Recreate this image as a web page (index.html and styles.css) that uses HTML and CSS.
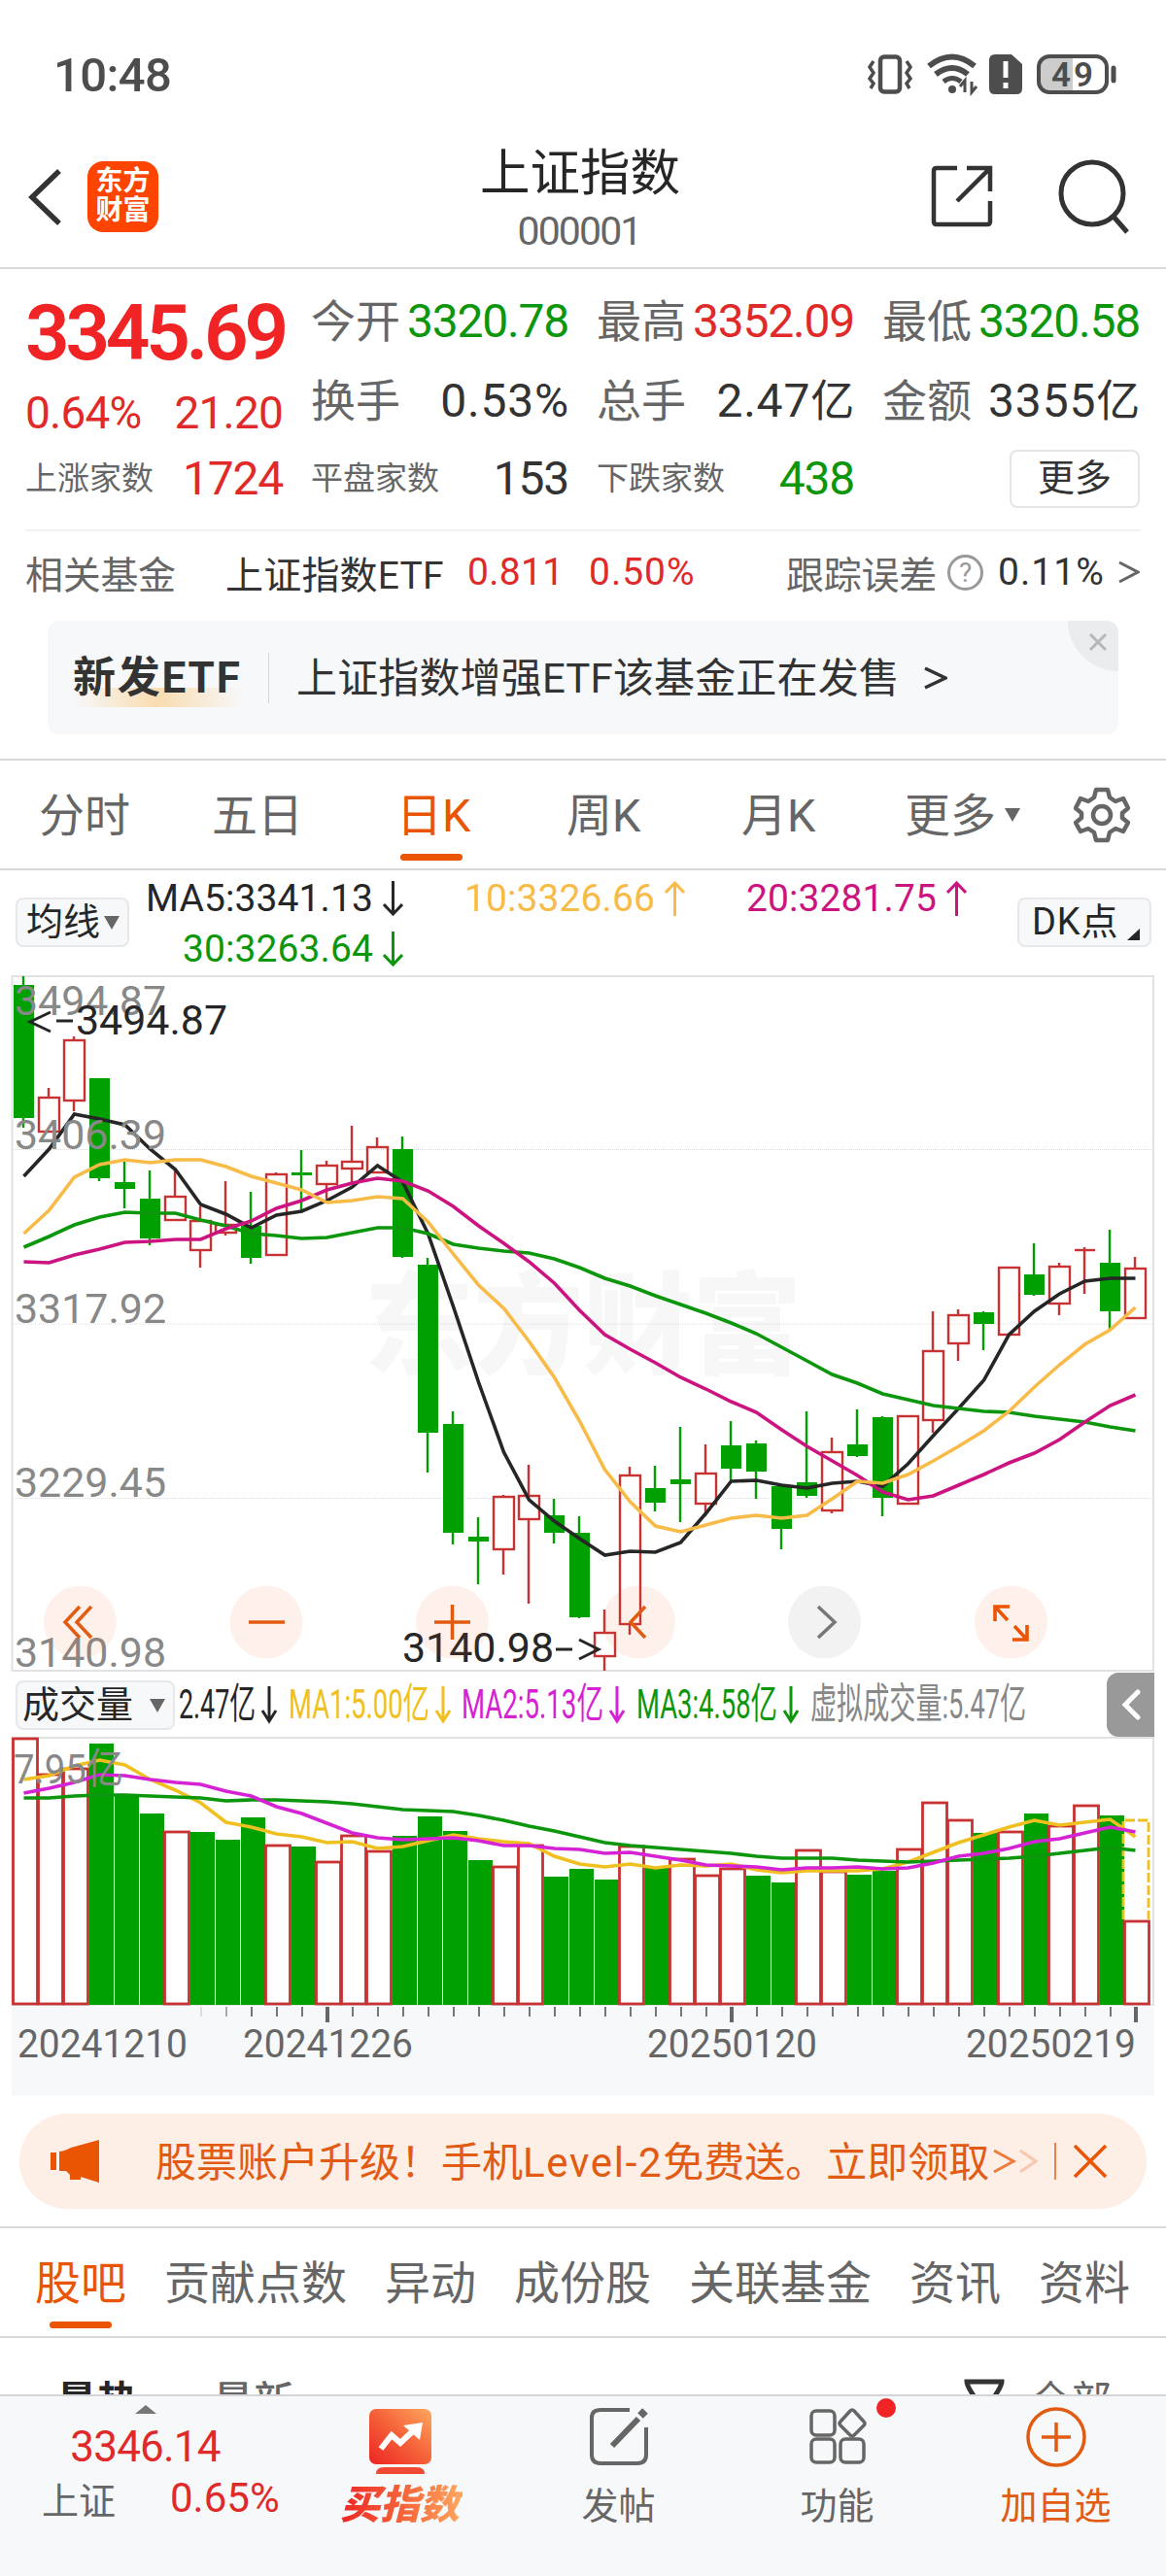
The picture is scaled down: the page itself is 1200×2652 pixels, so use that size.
FILE: index.html
```html
<!DOCTYPE html>
<html lang="zh-CN">
<head>
    <meta charset="utf-8" />
    <title>上证指数</title>
    <link rel="stylesheet" href="styles.css">
</head>
<body>
    <div class="status">
        <span class="time">10:48</span>
        <svg class="status-icons" width="260" height="44" viewBox="890 55 260 44" fill="none" stroke="#4d4d4d">
            <rect x="906" y="58.500" width="20" height="36" rx="4" stroke-width="4.500"/>
            <path d="M899 63l-4 6 4 6-4 6 4 5-3 5M933 63l4 6-4 6 4 6-4 5 3 5" stroke-width="3.500"/>
            <path d="M956 68q24-19 47 0M963 76.500q17-13 33 0" stroke-width="6"/>
            <path d="M971 84q9-7 18 0" stroke-width="5"/>
            <circle cx="980" cy="92" r="4" fill="#4d4d4d" stroke="none"/>
            <path d="M993 95V83l-5 6M1000 84v11l5-6" stroke-width="3"/>
            <path d="M1024 56h17l11 10v25q0 6-6 6h-22q-6 0-6-6V62q0-6 6-6z" fill="#4d4d4d" stroke="none"/>
            <path d="M1035 63v17M1035 85v6" stroke="#fff" stroke-width="5"/>
            <path d="M1079 58h25v37h-25q-9 0-9-9V67q0-9 9-9z" fill="#ccc" stroke="none"/>
            <rect x="1069" y="58" width="70" height="37" rx="11" stroke-width="4"/>
            <path d="M1146 70v13" stroke-width="5" stroke-linecap="round"/>
            <text x="1082" y="88.500" class="battery" textLength="43">49</text>
        </svg>
    </div>

    <div class="header">
        <svg class="back" width="40" height="64" viewBox="0 0 40 64"><path d="M35 5L7 32l28 27" fill="none" stroke="#333" stroke-width="5.500"/></svg>
        <div class="logo">东方<br>财富</div>
        <div class="title">
            <h1>上证指数</h1>
            <p>000001</p>
        </div>
        <svg class="share" width="66" height="66" viewBox="0 0 66 66" fill="none" stroke="#333" stroke-width="4.500">
            <path d="M28 4H7Q4 4 4 7v52q0 3 3 3h52q3 0 3-3V38M38 4h24v24M62 4L28 38"/>
        </svg>
        <svg class="search" width="78" height="78" viewBox="0 0 78 78" fill="none" stroke="#333" stroke-width="5">
            <circle cx="36" cy="36" r="32"/><path d="M58 60l14 16"/>
        </svg>
    </div>

    <div class="quote">
        <div class="cell low"><b class="price">3345.69</b></div>
        <div class="cell"><label>今开</label><span class="num down">3320.78</span></div>
        <div class="cell"><label>最高</label><span class="num up">3352.09</span></div>
        <div class="cell"><label>最低</label><span class="num down">3320.58</span></div>
        <div class="cell low"><span class="num up mid">0.64%</span><span class="num up mid">21.20</span></div>
        <div class="cell"><label>换手</label><span class="num wide">0.53%</span></div>
        <div class="cell"><label>总手</label><span class="num wide">2.47<i>亿</i></span></div>
        <div class="cell"><label>金额</label><span class="num wide">3355<i>亿</i></span></div>
        <div class="cell"><label class="small">上涨家数</label><span class="num up">1724</span></div>
        <div class="cell"><label class="small">平盘家数</label><span class="num">153</span></div>
        <div class="cell"><label class="small">下跌家数</label><span class="num down">438</span></div>
        <div class="cell end"><a class="more">更多</a></div>
    </div>

    <div class="fund">
        <span class="gray w1">相关基金</span>
        <span class="w2">上证指数ETF</span>
        <span class="up w3">0.811</span>
        <span class="up w5">0.50%</span>
        <span class="gray right">跟踪误差</span>
        <span class="ask">?</span>
        <span class="w4">0.11%</span>
        <svg width="22" height="26" viewBox="0 0 22 26" fill="none" stroke="#666" stroke-width="3"><path d="M1 3l19 10L1 23"/></svg>
    </div>

    <div class="ad">
        <b>新发ETF</b>
        <p>上证指数增强ETF该基金正在发售</p>
        <svg width="24" height="26" viewBox="0 0 24 26" fill="none" stroke="#333" stroke-width="3.500"><path d="M1 3l21 10L1 23"/></svg>
        <span class="ad-close">
            <svg width="20" height="20" viewBox="0 0 20 20" stroke="#b5b7ba" stroke-width="3"><path d="M2 2l16 16M18 2L2 18"/></svg>
        </span>
    </div>

    <div class="tabs">
        <a class="t1">分时</a>
        <a class="t2">五日</a>
        <a class="t3 current">日K</a>
        <a class="t4">周K</a>
        <a class="t5">月K</a>
        <a class="t6">更多</a>
        <svg class="caret" width="16" height="14" viewBox="0 0 16 14"><path d="M0 0h16L8 14z" fill="#666"/></svg>
        <svg width="58" height="60" viewBox="-29 -30 58 60" fill="none" stroke="#666" stroke-width="4.500" stroke-linejoin="round">
            <path d="M-6-26H6L8-18 14-14 22-17 27-7 21-2V3L27 8 22 17 14 14 8 18 6 26H-6L-8 18-14 14-22 17-27 8-21 3V-2L-27-7-22-17-14-14-8-18z"/>
            <circle r="9"/>
        </svg>
    </div>

    <div class="legend">
        <a class="btn ma">均线<svg width="16" height="14" viewBox="0 0 16 14"><path d="M0 0h16L8 14z" fill="#666"/></svg></a>
        <div class="lines">
            <span class="c5">MA5:3341.13<svg class="arr" viewBox="0 0 21 36"><path d="M10.500 0v34M1 24l9.500 10L20 24"/></svg></span>
            <span class="c10">10:3326.66<svg class="arr" viewBox="0 0 21 36"><path d="M10.500 36V2M1 12l9.500-10L20 12"/></svg></span>
            <span class="c20">20:3281.75<svg class="arr" viewBox="0 0 21 36"><path d="M10.500 36V2M1 12l9.500-10L20 12"/></svg></span>
            <span class="c30">30:3263.64<svg class="arr" viewBox="0 0 21 36"><path d="M10.500 0v34M1 24l9.500 10L20 24"/></svg></span>
        </div>
        <a class="btn dk">DK点<svg width="13" height="12" viewBox="0 0 13 12"><path d="M13 0v12H0z" fill="#262626"/></svg></a>
    </div>

    <svg id="kline" width="1200" height="718" viewBox="0 1004 1200 718"></svg>

    <div class="vol-legend">
        <a class="btn vol">成交量<svg width="16" height="14" viewBox="0 0 16 14"><path d="M0 0h16L8 14z" fill="#666"/></svg></a>
        <svg class="vol-text" width="930" height="66" viewBox="180 1722 930 66">
            <g fill="#262626" stroke="#262626"><text x="184" y="1769" textLength="79" lengthAdjust="spacingAndGlyphs">2.47亿</text><path d="M277 1736v35M270 1761l7 11 7-11"/></g>
            <g fill="#f0c020" stroke="#f0c020"><text x="297" y="1769" textLength="145" lengthAdjust="spacingAndGlyphs">MA1:5.00亿</text><path d="M456 1736v35M449 1761l7 11 7-11"/></g>
            <g fill="#d422d4" stroke="#d422d4"><text x="475" y="1769" textLength="146" lengthAdjust="spacingAndGlyphs">MA2:5.13亿</text><path d="M635 1736v35M628 1761l7 11 7-11"/></g>
            <g fill="#0c960c" stroke="#0c960c"><text x="655" y="1769" textLength="145" lengthAdjust="spacingAndGlyphs">MA3:4.58亿</text><path d="M814 1736v35M807 1761l7 11 7-11"/></g>
            <text x="834" y="1769" textLength="222" lengthAdjust="spacingAndGlyphs" fill="#888">虚拟成交量:5.47亿</text>
        </svg>
        <a class="fold"><svg width="20" height="32" viewBox="0 0 20 32"><path d="M17 3L4 16l13 13" fill="none" stroke="#fff" stroke-width="5" stroke-linecap="round"/></svg></a>
    </div>

    <svg id="volume" width="1200" height="369" viewBox="0 1788 1200 369"></svg>

    <div class="notice">
        <svg width="50" height="44" viewBox="0 0 50 44" fill="#ea5504"><path d="M0 13h6v18H0zM9 12q4 0 12-4L50 0v44l-19-6v3H20v-5l-4-4H9z"/></svg>
        <p>股票账户升级！手机<span>Level-2</span>免费送。立即领取</p>
        <svg class="gt" width="46" height="28" viewBox="0 0 46 28" fill="none" stroke="#ea5504" stroke-width="3"><path d="M1 3l20 11L1 25" opacity=".75"/><path d="M28 3l16 11L28 25" opacity=".25"/></svg>
        <svg class="close" width="36" height="36" viewBox="0 0 36 36" stroke="#ea5504" stroke-width="3.500"><path d="M2 2l32 32M34 2L2 34"/></svg>
    </div>

    <div class="nav">
        <a class="current">股吧</a>
        <a>贡献点数</a>
        <a>异动</a>
        <a>成份股</a>
        <a>关联基金</a>
        <a>资讯</a>
        <a>资料</a>
    </div>

    <div class="feed">
        <b>最热</b>
        <span class="new">最新</span>
        <svg width="42" height="40" viewBox="0 0 42 40" fill="none" stroke="#333" stroke-width="5"><path d="M3 3h36q0 5-11 20v14H14V23Q3 8 3 3z"/></svg>
        <span>全部</span>
    </div>

    <div class="bottom">
        <div class="index">
            <svg width="22" height="9" viewBox="0 0 22 9"><path d="M0 9L11 0l11 9z" fill="#777"/></svg>
            <div class="num up">3346.14</div>
            <div class="row"><span>上证</span><span class="num up">0.65%</span></div>
        </div>
        <div class="item buy">
            <svg width="66" height="68" viewBox="0 0 66 68">
                <defs><linearGradient id="g" x1="0" y1="1" x2="1" y2="0"><stop offset="0" stop-color="#ed2424"/><stop offset=".5" stop-color="#f46138"/><stop offset="1" stop-color="#ffa75e"/></linearGradient></defs>
                <rect x="1" width="64" height="57" rx="7" fill="url(#g)"/>
                <path d="M8 67q0-7 8-7h34q8 0 8 7z" fill="#f04a34"/>
                <path d="M13 41l11-14 9 8 16-15" fill="none" stroke="#fff" stroke-width="6"/>
                <path d="M36 17l20-3-3 18z" fill="#fff"/>
            </svg>
            <span>买指数</span>
        </div>
        <div class="item">
            <svg width="62" height="62" viewBox="0 0 62 62" fill="none" stroke="#666" stroke-width="4">
                <path d="M42 4H12Q3 4 3 12v38q0 9 9 9h38q9 0 9-9V22"/>
                <path d="M24 41L51 13" stroke-width="6"/><path d="M53 10l5-5" stroke-width="8"/>
            </svg>
            <span>发帖</span>
        </div>
        <div class="item">
            <svg width="62" height="62" viewBox="0 0 62 62" fill="none" stroke="#666" stroke-width="3.500">
                <rect x="4" y="5" width="24" height="25" rx="5"/><rect x="4" y="34" width="24" height="24" rx="5"/><rect x="34" y="34" width="24" height="24" rx="5"/>
                <path d="M44 5q2-2 4 0l10 11q2 2 0 4L48 30q-2 2-4 0L34 20q-2-2 0-4z"/>
            </svg>
            <i class="dot"></i>
            <span>功能</span>
        </div>
        <div class="item add">
            <svg width="64" height="64" viewBox="0 0 64 64" fill="none" stroke="#e25b12" stroke-width="3.500"><circle cx="32" cy="32" r="29"/><path d="M32 17v30M17 32h30"/></svg>
            <span>加自选</span>
        </div>
    </div>

    <script src="chart.js"></script>
</body>
</html>
```
FILE: styles.css
```css
* {
    margin: 0;
    padding: 0;
    box-sizing: border-box;
}

body {
    width: 1200px;
    background: #fff;
    color: #333;
    font-family: Roboto, "Noto Sans CJK SC", sans-serif;
    overflow-x: hidden;
}

svg {
    display: block;
    flex: none;
}

i {
    font-style: normal;
}

.up {
    color: #e02a2a !important;
}

.down {
    color: #0c960c !important;
}

.gray {
    color: #666;
}

/* status bar */
.status {
    display: flex;
    justify-content: space-between;
    height: 130px;
    padding: 55px 50px 0 55px;
}

.time {
    font-size: 49px;
    font-weight: 500;
    line-height: 45px;
    letter-spacing: -.6px;
    color: #4d4d4d;
}

.battery {
    font-size: 35px;
    font-weight: 600;
    fill: #4d4d4d;
    stroke: none;
}

/* title */
.header {
    display: flex;
    height: 147px;
    padding-left: 26px;
    border-bottom: 2px solid #d9d9d9;
}

.back {
    margin-top: 41px;
}

.logo {
    width: 73px;
    height: 73px;
    margin: 36px 0 0 24px;
    padding-top: 6px;
    border-radius: 16px;
    background: #ff4400;
    color: #fff;
    font-size: 28px;
    font-weight: 600;
    line-height: 30px;
    text-align: center;
}

.title {
    width: 260px;
    margin-left: 303px;
    text-align: center;
}

.title h1 {
    margin-top: 19px;
    font-size: 51.5px;
    font-weight: 400;
    line-height: 60px;
    color: #262626;
    white-space: nowrap;
    margin-right: -2px;
}

.title p {
    margin-top: 5px;
    font-size: 41px;
    line-height: 48px;
    letter-spacing: -1.9px;
    color: #666;
}

.title + .share {
    margin: 39px 0 0 231px;
}

.search {
    margin: 33px 0 0 65px;
}

/* quote numbers */
.quote {
    display: grid;
    grid-template-columns: repeat(4, 265px);
    grid-template-rows: 82px 82px 78px;
    column-gap: 29px;
    height: 270px;
    margin: 0 26px;
    padding: 13px 0 0;
    border-bottom: 2px solid #f2f2f2;
}

.cell {
    display: flex;
    align-items: center;
    justify-content: space-between;
    white-space: nowrap;
}

.cell.low {
    padding-top: 24px;
}

.cell.end {
    justify-content: flex-end;
}

.cell label {
    font-size: 46px;
    line-height: 50px;
    color: #666;
}

.cell label.small {
    font-size: 33px;
}

.num {
    font-size: 48px;
    line-height: 56px;
    letter-spacing: -1.2px;
}

.num.wide {
    letter-spacing: .8px;
    margin-right: -1px;
}

.num i {
    font-size: 45px;
}

.num.mid {
    font-size: 46px;
    letter-spacing: -.8px;
}

.price {
    font-size: 80px;
    font-weight: 600;
    line-height: 80px;
    letter-spacing: -4.3px;
    color: #f02424;
}

.more {
    width: 134px;
    height: 60px;
    border: 2px solid #e5e5e5;
    border-radius: 8px;
    font-size: 38px;
    line-height: 54px;
    text-align: center;
}

/* related fund */
.fund {
    display: flex;
    align-items: center;
    height: 84px;
    padding: 0 27px 0 26px;
    font-size: 39px;
    letter-spacing: -.3px;
    white-space: nowrap;
}

.w1 {
    width: 206px;
}

.w2 {
    width: 249px;
    letter-spacing: .2px;
}

.w3 {
    width: 125px;
    letter-spacing: .3px;
}

.w5 {
    letter-spacing: 1px;
}

.right {
    margin-left: auto;
}

.ask {
    width: 37px;
    height: 37px;
    margin: 0 15px 0 11px;
    border: 3px solid #999;
    border-radius: 50%;
    color: #999;
    font-size: 28px;
    line-height: 31px;
    text-align: center;
}

.w4 {
    margin-right: 14px;
    letter-spacing: 1.1px;
}

/* ad */
.ad {
    position: relative;
    display: flex;
    align-items: center;
    height: 117px;
    margin: 8px 49px 25px;
    padding-left: 26px;
    border-radius: 12px;
    background: #f7f8fa;
    overflow: hidden;
}

.ad b {
    width: 176px;
    font-size: 44px;
    line-height: 62px;
    letter-spacing: 1.8px;
    white-space: nowrap;
    background: linear-gradient(90deg, #f7f8fa, #f9dcb0 50%, #f7f8fa) 0 41px / 175px 20px no-repeat;
}

.ad p {
    margin: 0 25px 0 25px;
    padding: 2px 0 0 28px;
    border-left: 1px solid #d5d6d8;
    font-size: 42px;
    line-height: 50px;
    letter-spacing: .15px;
    white-space: nowrap;
}

.ad-close {
    position: absolute;
    right: 0;
    top: 0;
    width: 52px;
    height: 52px;
    padding: 12px 0 0 21px;
    border-bottom-left-radius: 52px;
    background: #ebecee;
}

/* period tabs */
.tabs {
    display: flex;
    align-items: center;
    height: 115px;
    padding-left: 40px;
    border-top: 2px solid #d9d9d9;
    border-bottom: 2px solid #d9d9d9;
    font-size: 47px;
    color: #666;
}

.tabs a {
    height: 111px;
    line-height: 113px;
    white-space: nowrap;
}

.t1 {
    width: 178px;
}

.t2 {
    width: 190px;
}

.t3 {
    width: 175px;
}

.t4 {
    width: 180px;
}

.t5 {
    width: 168px;
}

.t6 {
    width: 103px;
}

.caret {
    margin-right: 55px;
}

.current {
    color: #ea5504;
}

.current::after {
    content: "";
    display: block;
    width: 64px;
    height: 7px;
    margin: -17px 0 0 4px;
    border-radius: 4px;
    background: #ea5504;
}

/* moving averages */
.legend {
    display: flex;
    height: 108px;
    padding: 3px 0 0 16px;
}

.btn {
    display: flex;
    align-items: center;
    height: 51px;
    border: 2px solid #e6e8eb;
    border-radius: 8px;
    background: #f7f8fa;
    color: #262626;
    font-size: 38px;
    line-height: 47px;
    white-space: nowrap;
}

.ma {
    width: 117px;
    margin-top: 25px;
    padding-left: 9px;
    gap: 4px;
}

.lines {
    display: grid;
    grid-template-columns: repeat(3, 290px);
    grid-template-rows: 52px 52px;
    margin-left: -8px;
}

.lines span {
    display: flex;
    align-items: center;
    justify-content: flex-end;
    gap: 10px;
    font-size: 39px;
    letter-spacing: .1px;
}

.arr {
    width: 21px;
    height: 36px;
    fill: none;
    stroke: currentColor;
    stroke-width: 3;
}

.c5 {
    color: #262626;
}

.c10 {
    color: #f8bb48;
}

.c20 {
    color: #cc1480;
}

.c30 {
    color: #0c960c;
}

.dk {
    width: 138px;
    margin: 25px 0 0 52px;
    padding-left: 13px;
    gap: 9px;
    letter-spacing: .8px;
}

.dk svg {
    margin-top: 24px;
}

/* volume legend */
.vol-legend {
    display: flex;
    height: 66px;
    padding-left: 16px;
}

.vol {
    width: 164px;
    margin-top: 8px;
    padding-left: 5px;
    gap: 17px;
}

.vol-text {
    font-size: 43px;
}

.vol-text path {
    fill: none;
    stroke-width: 3;
}

.vol-text text {
    stroke: none;
}

.fold {
    display: flex;
    align-items: center;
    justify-content: center;
    width: 49px;
    height: 66px;
    margin-left: 29px;
    border-radius: 12px 0 0 12px;
    background: #999;
}

/* notice */
.notice {
    display: flex;
    align-items: center;
    height: 98px;
    margin: 19px 20px 18px;
    padding-left: 32px;
    border-radius: 49px;
    background: #fdeee6;
    color: #e25b12;
}

.notice p {
    width: 862px;
    margin-left: 58px;
    padding-bottom: 5px;
    font-size: 42px;
    white-space: nowrap;
}

.notice p span {
    letter-spacing: 1.7px;
}

.notice .close {
    margin-left: 17px;
}

.gt {
    box-sizing: content-box;
    padding-right: 17px;
    border-right: 2px solid #e8824d;
    height: 38px;
}

/* section nav */
.nav {
    display: flex;
    gap: 39px;
    height: 115px;
    padding-left: 36px;
    border-top: 2px solid #d9d9d9;
    border-bottom: 2px solid #d9d9d9;
    font-size: 47px;
    line-height: 113px;
    color: #666;
    white-space: nowrap;
}

.nav .current::after {
    margin-left: 15px;
}

.feed {
    display: flex;
    height: 58px;
    padding: 38px 0 0 58px;
    overflow: hidden;
    font-size: 42px;
    line-height: 56px;
    color: #666;
}

.feed .new {
    flex: none;
    width: 773px;
    margin-left: 77px;
    font-weight: 500;
}

.feed b,
.feed span {
    white-space: nowrap;
}

.feed b {
    color: #262626;
}

.feed svg {
    margin: 4px 26px 0 0;
}

/* bottom bar */
.bottom {
    display: flex;
    height: 187px;
    border-top: 2px solid #d3d5d8;
    background: #f7f8fa;
    font-size: 38px;
    color: #666;
}

.index {
    display: flex;
    flex-direction: column;
    align-items: center;
    width: 299px;
    padding-top: 9px;
}

.index .num {
    margin-top: 9px;
    font-size: 44px;
    line-height: 50px;
    letter-spacing: -.8px;
}

.index .row {
    display: flex;
    gap: 56px;
    width: 257px;
    padding-left: 22px;
    align-items: center;
    margin-top: 0;
}

.index .row .num {
    margin: 0;
    font-size: 42px;
    letter-spacing: 0;
}

.index span {
    white-space: nowrap;
}

.item {
    position: relative;
    display: flex;
    flex-direction: column;
    align-items: center;
    width: 225px;
    padding-top: 10px;
}

.item span {
    margin-top: 16px;
    line-height: 50px;
}

.buy {
    padding: 13px 0 0 0;
}

.buy span {
    margin-top: 5px;
    padding: 0 3px;
    font-size: 41px;
    font-weight: 900;
    font-style: italic;
    line-height: 52px;
    background: linear-gradient(90deg, #ed2424, #f46138 50%, #ffa75e);
    -webkit-background-clip: text;
    color: transparent;
}

.add {
    color: #e25b12;
}

.add span {
    margin-top: 14px;
}

.dot {
    position: absolute;
    left: 153px;
    top: 2px;
    width: 20px;
    height: 20px;
    border-radius: 50%;
    background: #f02424;
}

/* charts */
.axis {
    font-size: 43px;
    fill: #888;
}

.mark {
    font-size: 43px;
    fill: #262626;
}

.date {
    font-size: 41px;
    fill: #666;
}

.watermark {
    font-size: 114px;
    font-weight: 900;
    fill: #f7f7f7;
}
```
FILE: chart.js
```js
var GREEN = "#00a000", RED = "#c83232";
var step = 26, left = 24;

// [up, body top, body bottom, high, low]
var candles = [
    [0,1014,1151,1005,1161],[1,1130,1165,1120,1165],[1,1071,1133,1067,1144],[0,1110,1213,1110,1216],[0,1217,1224,1195,1244],
    [0,1234,1275,1205,1282],[1,1232,1256,1204,1256],[1,1257,1287,1242,1305],[1,1261,1269,1216,1272],[0,1262,1295,1227,1301],
    [1,1209,1292,1207,1292],[0,1207,1210,1184,1249],[1,1200,1219,1195,1234],[1,1196,1203,1159,1218],[1,1181,1207,1171,1207],
    [0,1183,1294,1170,1295],[0,1302,1475,1295,1516],[0,1466,1578,1453,1590],[0,1582,1587,1562,1631],[1,1541,1595,1539,1621],
    [1,1540,1564,1508,1651],[0,1560,1578,1543,1589],[0,1578,1665,1561,1666],[1,1681,1705,1657,1720],[1,1519,1672,1510,1683],
    [0,1532,1547,1509,1556],[0,1523,1528,1469,1567],[1,1517,1548,1487,1561],[0,1488,1512,1463,1524],[0,1486,1515,1483,1543],
    [0,1530,1574,1530,1595],[0,1526,1540,1453,1542],[1,1495,1555,1480,1558],[0,1487,1499,1451,1500],[0,1459,1542,1458,1561],
    [1,1458,1548,1457,1549],[1,1391,1462,1350,1475],[1,1354,1383,1348,1401],[0,1351,1363,1350,1390],[1,1305,1374,1305,1374],
    [0,1312,1333,1280,1334],[1,1304,1342,1300,1354],[1,1287,1287,1284,1332],[0,1300,1350,1266,1370],[1,1306,1357,1294,1357]
];
var ma = {
    "#262626": [1211,1183,1147,1152,1158,1183,1204,1240,1250,1264,1251,1247,1236,1222,1200,1217,1270,1345,1423,1495,1544,1566,1584,1601,1597,1598,1588,1558,1525,1524,1529,1532,1527,1525,1530,1507,1478,1450,1421,1374,1350,1332,1319,1316,1316],
    "#0c960c": [1284,1273,1261,1253,1248,1249,1249,1256,1262,1270,1272,1275,1274,1269,1264,1264,1270,1281,1285,1288,1290,1296,1305,1316,1324,1334,1343,1352,1362,1373,1387,1401,1415,1424,1435,1441,1447,1450,1453,1454,1458,1461,1464,1469,1473],
    "#cc1480": [1299,1300,1292,1286,1279,1278,1276,1276,1265,1257,1244,1236,1225,1218,1213,1216,1226,1242,1262,1280,1299,1321,1349,1374,1389,1403,1418,1430,1443,1454,1472,1489,1504,1519,1536,1544,1540,1529,1518,1506,1496,1482,1464,1447,1436],
    "#f8bb48": [1270,1246,1212,1199,1194,1197,1194,1194,1201,1211,1218,1225,1238,1236,1232,1234,1258,1291,1323,1347,1381,1418,1463,1513,1546,1571,1577,1570,1563,1560,1563,1560,1543,1525,1527,1518,1504,1489,1473,1453,1428,1405,1384,1369,1346]
};

// volume bar tops, bottom is 2063
var vol = [1790,1827,1821,1795,1849,1867,1886,1886,1894,1871,1900,1901,1917,1890,1906,1890,1870,1885,1915,1922,1900,1932,1924,1935,1901,1923,1914,1931,1924,1931,1938,1905,1927,1930,1926,1904,1856,1874,1887,1886,1867,1880,1859,1869,1978];
var volRed = [0,1,2,6,10,12,13,14,19,20,24,26,27,28,31,32,35,36,37,39,41,42,44];
var volMa = {
    "#f0c020": [1832,1828,1818,1812,1817,1832,1843,1856,1876,1881,1888,1891,1897,1896,1903,1901,1895,1889,1893,1896,1898,1911,1919,1922,1919,1923,1920,1921,1919,1925,1928,1926,1926,1926,1924,1917,1907,1897,1889,1881,1874,1879,1876,1873,1891],
    "#0c960c": [1851,1851,1849,1848,1848,1849,1850,1851,1854,1853,1853,1854,1855,1857,1860,1863,1864,1865,1869,1874,1880,1885,1891,1897,1900,1902,1904,1906,1908,1911,1913,1913,1913,1915,1916,1917,1916,1915,1914,1913,1911,1908,1905,1902,1905],
    "#d422d4": [1846,1841,1835,1827,1828,1832,1835,1837,1844,1849,1860,1867,1877,1887,1892,1894,1893,1892,1895,1900,1900,1903,1904,1908,1907,1911,1915,1920,1921,1922,1925,1923,1923,1922,1924,1923,1918,1911,1908,1903,1896,1893,1887,1881,1886]
};

function x(i) {
    return left + i * step;
}

function rect(rx, y, w, h, attr) {
    return '<rect x="' + rx + '" y="' + y + '" width="' + w + '" height="' + h + '" ' + attr + '/>';
}

function path(d, color, w, extra) {
    return '<path d="' + d + '" fill="none" stroke="' + color + '" stroke-width="' + w + '" ' + (extra || "") + '/>';
}

function text(cls, tx, y, len, s) {
    return '<text class="' + cls + '" x="' + tx + '" y="' + y + '" textLength="' + len + '" lengthAdjust="spacingAndGlyphs">' + s + '</text>';
}

function lines(set) {
    var out = "";
    for (var color in set) {
        var d = set[color].map(function (y, i) {
            return (i ? "L" : "M") + (x(i) + .5) + " " + y;
        }).join("");
        out += path(d, color, 3.6);
    }
    return out;
}

function drawKline() {
    var s = text("watermark", 375, 1405, 450, "东方财富");
    [1183.5, 1363, 1542.5].forEach(function (y) {
        s += path("M12 " + y + "H1187", "#dcdcdc", 1, 'stroke-dasharray="1 1"');
    });
    s += rect(12.5, 1005, 1174.5, 715, 'fill="none" stroke="#e2e2e4" stroke-width="2"');
    candles.forEach(function (c, i) {
        var cx = x(i);
        if (c[0]) {
            s += path("M" + cx + " " + c[3] + "V" + c[1] + "M" + cx + " " + c[2] + "V" + c[4], RED, 2.4);
            if (c[2] > c[1]) {
                s += rect(cx - 10, c[1], 21, c[2] - c[1], 'fill="none" stroke="' + RED + '" stroke-width="2.400"');
            } else {
                s += path("M" + (cx - 10) + " " + c[1] + "h21", RED, 2.4);
            }
        } else {
            s += path("M" + cx + " " + c[3] + "V" + c[4], GREEN, 2.4);
            s += rect(cx - 10, c[1], 21, c[2] - c[1], 'fill="' + GREEN + '"');
        }
    });
    s += lines(ma);
    s += text("axis", 15, 1045, 156, "3494.87");
    s += text("axis", 15, 1183, 156, "3406.39");
    s += text("axis", 15, 1362, 156, "3317.92");
    s += text("axis", 15, 1541, 156, "3229.45");
    s += text("axis", 15, 1716, 156, "3140.98");
    s += text("mark", 78, 1065, 156, "3494.87");
    s += path("M52 1042L31 1052l21 10M58 1051h17", "#262626", 3);
    s += text("mark", 414, 1711, 156, "3140.98");
    s += path("M596 1688l20 10-20 10M572 1698h17", "#262626", 3);

    // round tool buttons
    [82.5, 274, 465.5, 657.5, 848.5, 1040.5].forEach(function (cx, i) {
        s += '<circle cx="' + cx + '" cy="1670" r="37.500" fill="' + (i == 4 ? "#000" : "#f55a14") + '" opacity="' + (i == 4 ? ".05" : ".085") + '"/>';
    });
    var o = "#e25b12";
    s += path("M82 1654l-15 16 15 16M94 1654l-15 16 15 16", o, 3.5);
    s += path("M256 1670h37", o, 3.5);
    s += path("M447 1670h37M465.500 1652v36", o, 3.5);
    s += path("M664 1654l-15 16 15 16", o, 3.5);
    s += path("M842 1654l17 16-17 16", "#777", 3.5);
    s += path("M1037 1668l-13-14M1024 1669v-15h15M1044 1674l13 14M1057 1673v15h-15", "#ea5504", 3.6);
    document.getElementById("kline").innerHTML = s;
}

function drawVolume() {
    var s = rect(12, 2066, 1176, 91, 'fill="#f7f8fa"');
    s += rect(12.5, 1789, 1174.5, 275, 'fill="none" stroke="#e2e2e4" stroke-width="2"');
    vol.forEach(function (y, i) {
        if (volRed.indexOf(i) > -1) {
            s += rect(x(i) - 10.5, y, 25, 2063 - y, 'fill="none" stroke="' + RED + '" stroke-width="2.800"');
        } else {
            s += rect(x(i) - 10, y, 25, 2064 - y, 'fill="' + GREEN + '"');
        }
    });
    s += path("M1156 1976V1874h26V1976", "#f0c020", 2.8, 'stroke-dasharray="10 3"');
    s += lines(volMa);
    s += text("axis", 14, 1836, 113, "7.95亿");
    for (var i = 7; i < 45; i++) {
        var big = i == 12 || i == 28 || i == 44;
        s += path("M" + (x(i) + 1) + " 2066v" + (big ? 16 : 10), big ? "#666" : i == 7 ? "#ddd" : i == 8 ? "#aaa" : "#777", big ? 4 : 2);
    }
    s += text("date", 18, 2118, 175, "20241210");
    s += text("date", 250, 2118, 175, "20241226");
    s += text("date", 666, 2118, 175, "20250120");
    s += text("date", 994, 2118, 175, "20250219");
    document.getElementById("volume").innerHTML = s;
}

drawKline();
drawVolume();
```
